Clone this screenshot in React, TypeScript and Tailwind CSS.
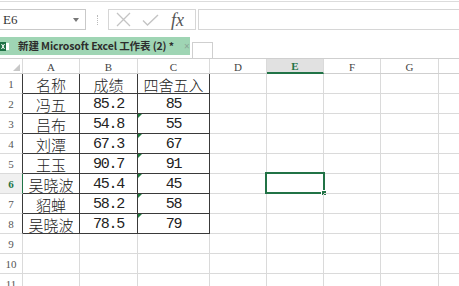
const cjk = "font-['SimSun','Noto_Sans_CJK_SC',sans-serif] font-light";
const mono = "font-['Liberation_Mono',monospace]";
const serif = "font-['Liberation_Serif',serif]";

const rows = [
  ["名称", "成绩", "四舍五入"],
  ["冯五", "85.2", "85"],
  ["吕布", "54.8", "55"],
  ["刘潭", "67.3", "67"],
  ["王玉", "90.7", "91"],
  ["吴晓波", "45.4", "45"],
  ["貂蝉", "58.2", "58"],
  ["吴晓波", "78.5", "79"],
];

const cols = [
  { key: "A", w: "w-[57px]" },
  { key: "B", w: "w-[58px]" },
  { key: "C", w: "w-[72px]" },
  { key: "D", w: "w-[57px]" },
  { key: "E", w: "w-[57px]" },
  { key: "F", w: "w-[57px]" },
  { key: "G", w: "w-[58px]" },
  { key: "", w: "w-[58px]" },
];

function GreenMark() {
  return (
    <span className="absolute left-0 top-0 w-0 h-0 border-t-[4px] border-r-[4px] border-t-[#1d7a3c] border-r-transparent" />
  );
}

function HeaderRow() {
  return (
    <div className="flex h-[16px] border-t border-b border-[#cfcfcf]">
      <div className="relative w-[23px] shrink-0 border-r border-[#dadada]">
        <span className="absolute right-[2px] bottom-[2px] w-0 h-0 border-b-[7px] border-l-[7px] border-b-[#c8c8c8] border-l-transparent" />
      </div>
      {cols.map((c, i) =>
        c.key === "E" ? (
          <div
            key={i}
            className={`${c.w} shrink-0 flex items-center justify-center bg-[#e1e1e1] border-r border-[#dadada] border-b-2 border-b-[#217346] -mb-px text-[11px] ${serif} text-[#217346] font-bold pt-[2px]`}
          >
            {c.key}
          </div>
        ) : (
          <div
            key={i}
            className={`${c.w} shrink-0 flex items-center justify-center border-r border-[#dadada] text-[11px] ${serif} text-[#444] pt-[2px]`}
          >
            {c.key}
          </div>
        )
      )}
    </div>
  );
}

function DataRow({ n }: { n: number }) {
  const data = rows[n - 1];
  const inTable = n <= 8;
  const selected = n === 6;
  return (
    <div className="flex h-[20px]">
      <div
        className={`w-[23px] shrink-0 flex items-center justify-center border-b border-[#dadada] border-r ${
          selected
            ? "border-r-[#217346] bg-[#f0f0f0] text-[#217346] font-bold"
            : inTable
            ? "border-r-[#3a3a3a] text-[#555]"
            : "border-r-[#dadada] text-[#555]"
        } text-[11px] ${serif} pt-[1px]`}
      >
        {n}
      </div>
      {cols.map((c, i) => {
        const tableCell = inTable && i < 3;
        return (
          <div
            key={i}
            className={`relative ${c.w} shrink-0 flex items-center justify-center border-r border-b ${
              tableCell ? "border-[#3a3a3a]" : "border-[#dadada]"
            } ${
              tableCell && i === 0 ? `${cjk} text-[15px]` : `${mono} text-[15px] tracking-[-1.3px]`
            } text-[#222] leading-none pt-[2px]`}
          >
            {tableCell && i === 2 && n >= 3 && <GreenMark />}
            {tableCell && (n === 1 ? <span className={`${cjk} tracking-normal`}>{data[i]}</span> : data[i])}
            {selected && c.key === "E" && (
              <span className="absolute -left-[2px] -top-[2px] w-[60px] h-[22px] border-2 border-[#217346]">
                <span className="absolute -right-[4px] -bottom-[4px] w-[6px] h-[6px] bg-[#217346] border border-white" />
              </span>
            )}
          </div>
        );
      })}
    </div>
  );
}

export default function App() {
  return (
    <div className="w-[459px] h-[286px] overflow-hidden bg-white">
      <div className="mt-px border-t border-[#dcdcdc]" />

      {/* formula bar */}
      <div className="flex mt-[7px] h-[21px]">
        <div className="relative w-[86px] shrink-0 border border-l-0 border-[#c9c9c9] flex items-center pl-[3px]">
          <span className={`${serif} text-[13px] text-[#333]`}>E6</span>
          <span className="absolute right-[6px] top-[8px] w-0 h-0 border-t-[4px] border-x-[3px] border-t-[#777] border-x-transparent" />
        </div>
        <div className="w-[22px] shrink-0 flex items-center justify-center">
          <span className="w-px h-[10px] border-l border-dotted border-[#bbb]" />
        </div>
        <div className="w-[88px] shrink-0 border border-[#d6d6d6] flex items-center gap-[10px] pl-[7px]">
          <svg width="15" height="15" viewBox="0 0 15 15" className="shrink-0">
            <path d="M1 1 L14 14 M14 1 L1 14" stroke="#c4c4c4" strokeWidth="1.3" fill="none" />
          </svg>
          <svg width="17" height="14" viewBox="0 0 17 14" className="shrink-0 ml-[1px]">
            <path d="M1 7.5 L5.5 12 L16 2" stroke="#c4c4c4" strokeWidth="1.4" fill="none" />
          </svg>
          <span className={`${serif} italic text-[18px] text-[#555] leading-none ml-[2px]`}>fx</span>
        </div>
        <div className="ml-[2px] flex-1 border border-r-0 border-[#d6d6d6]" />
      </div>

      {/* sheet tab */}
      <div className="flex mt-[7px] h-[18px]">
        <div className="w-[190px] shrink-0 bg-[#9fd5b4] flex items-center">
          <svg width="9" height="11" viewBox="0 0 9 11" className="shrink-0">
            <rect x="0" y="1" width="6" height="9" fill="#1e7145" />
            <rect x="6" y="2" width="3" height="7" fill="#ffffff" />
            <path d="M1.5 3 L4.5 8 M4.5 3 L1.5 8" stroke="#fff" strokeWidth="1" />
          </svg>
          <span className="ml-[9px] font-['Noto_Sans_CJK_SC',sans-serif] font-bold text-[10.5px] tracking-[-0.1px] text-[#2d2d2d] whitespace-nowrap">
            新建 Microsoft Excel 工作表 (2) *
          </span>
          <span className="ml-[10px] text-[10px] text-[#8aa596]">×</span>
        </div>
        <div className="ml-[2px] mt-[5px] w-[21px] h-[16px] border border-b-0 border-[#cfcfcf]" />
      </div>

      {/* grid */}
      <div className="mt-[3px]">
        <HeaderRow />
        {Array.from({ length: 11 }, (_, i) => (
          <DataRow key={i} n={i + 1} />
        ))}
      </div>
    </div>
  );
}
